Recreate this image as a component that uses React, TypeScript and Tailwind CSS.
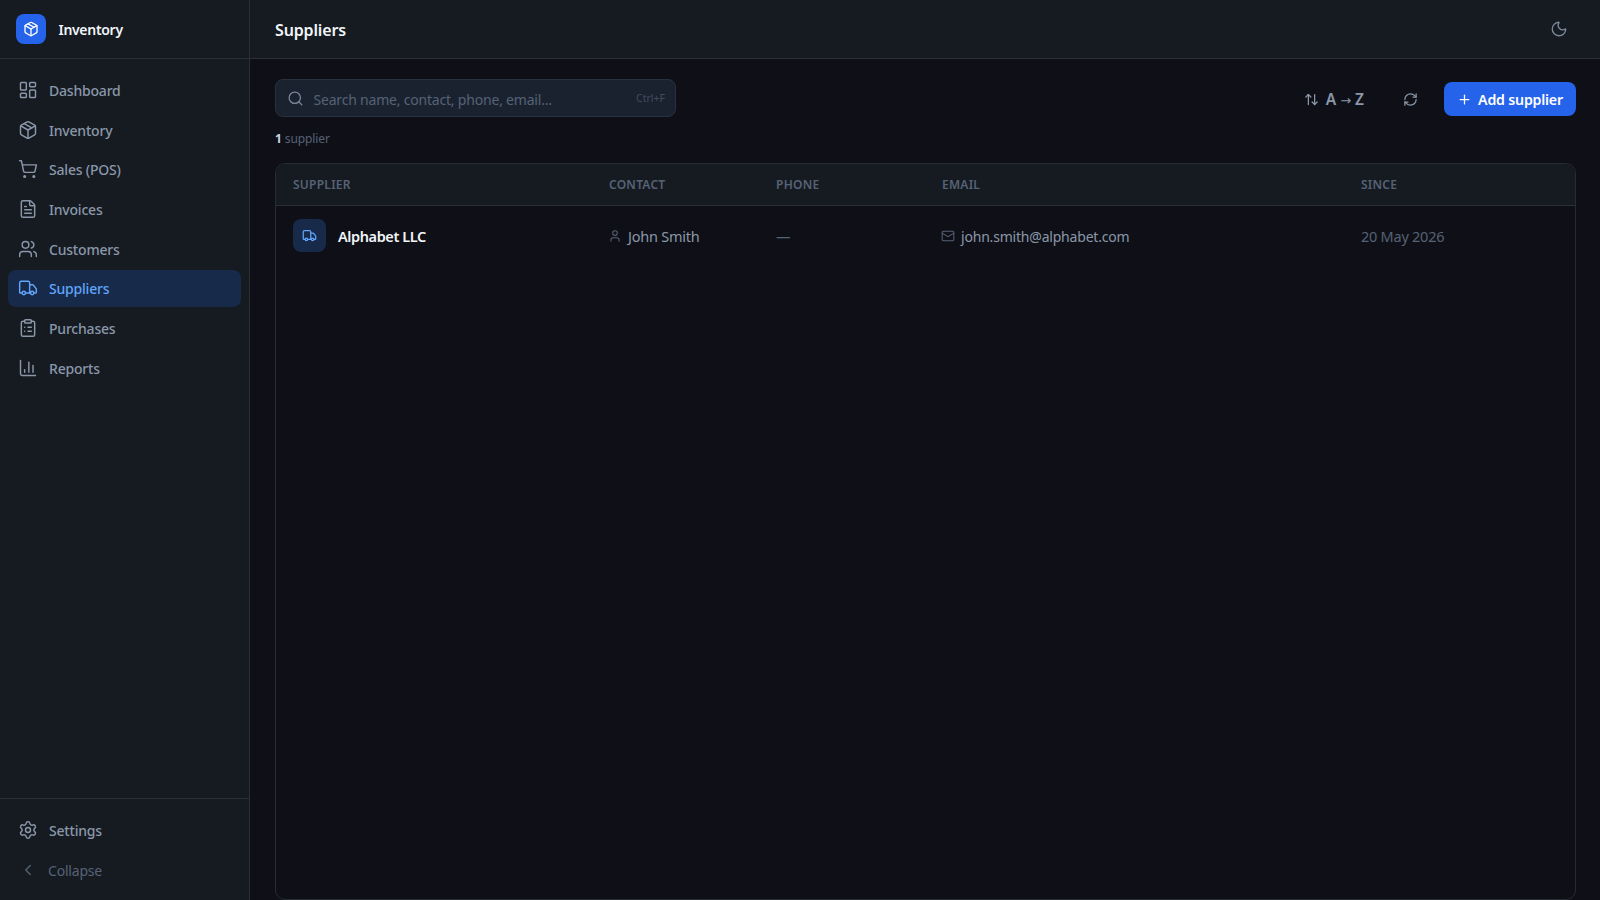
import React from "react";
import {
  LayoutDashboard, Package, ShoppingCart, FileText, Users, Truck, ClipboardList, ChartColumn,
  Settings, ChevronLeft, Search, ArrowUpDown, RefreshCw, Plus, Moon, User, Mail,
} from "lucide-react";

const nav = [
  { label: "Dashboard", icon: LayoutDashboard },
  { label: "Inventory", icon: Package },
  { label: "Sales (POS)", icon: ShoppingCart },
  { label: "Invoices", icon: FileText },
  { label: "Customers", icon: Users },
  { label: "Suppliers", icon: Truck, active: true },
  { label: "Purchases", icon: ClipboardList },
  { label: "Reports", icon: ChartColumn },
];

const row = "grid grid-cols-[316px_167px_166px_419px_1fr]";

export default function App() {
  return (
    <div className="flex h-[900px] w-[1600px] overflow-hidden bg-[#0f1017] font-['Noto_Sans','Liberation_Sans',sans-serif] text-[#94a3b8]">
      <aside className="flex w-[250px] shrink-0 flex-col border-r border-[#2a2f38] bg-[#161b22]">
        <div className="flex h-[59px] shrink-0 items-center gap-[12.5px] border-b border-[#2a2f38] pl-[16px]">
          <div className="flex h-[30px] w-[30px] items-center justify-center rounded-lg bg-[#2563eb] text-white">
            <Package size={16} strokeWidth={2} />
          </div>
          <span className="pt-[1px] text-[14px] font-semibold tracking-[-0.3px] text-[#f1f5f9]">Inventory</span>
        </div>
        <nav className="flex flex-1 flex-col gap-[2.25px] px-2 pt-[12.4px]">
          {nav.map((n) => {
            const Icon = n.icon;
            return (
              <div
                key={n.label}
                className={`flex h-[37.4px] items-center gap-[11.5px] rounded-lg pl-[9.5px] text-[14px] font-medium tracking-[-0.2px] ${
                  n.active ? "bg-[#172a4a] text-[#60a5fa]" : "text-[#8a97a9]"
                }`}
              >
                <Icon size={20} strokeWidth={1.75} className="shrink-0" />
                <span className="pt-[1px]">{n.label}</span>
              </div>
            );
          })}
        </nav>
        <div className="flex flex-col gap-[2.25px] border-t border-[#2a2f38] px-2 pb-[11.5px] pt-[12.5px]">
          <div className="flex h-[37.4px] items-center gap-[11.5px] rounded-lg pl-[9.5px] text-[14px] font-medium tracking-[-0.2px] text-[#8a97a9]">
            <Settings size={20} strokeWidth={1.75} className="shrink-0" />
            <span className="pt-[1px]">Settings</span>
          </div>
          <div className="flex h-[37.4px] items-center gap-[11px] rounded-lg pl-[11px] text-[14px] tracking-[-0.2px] text-[#566275]">
            <ChevronLeft size={18} strokeWidth={1.75} className="shrink-0" />
            <span className="pt-[2px]">Collapse</span>
          </div>
        </div>
      </aside>

      <main className="flex min-w-0 flex-1 flex-col">
        <header className="flex h-[59px] shrink-0 items-center justify-between border-b border-[#2a2f38] bg-[#161b22] pl-[25px] pr-[32px]">
          <h1 className="pt-[2px] text-[16px] font-semibold tracking-[-0.15px] text-[#f1f5f9]">Suppliers</h1>
          <Moon size={18} strokeWidth={1.75} className="text-[#7d8a9c]" />
        </header>

        <div className="flex min-h-0 flex-1 flex-col pl-[25px] pr-[24px] pt-[20px]">
          <div className="flex items-center justify-between">
            <div className="flex h-[38px] w-[401px] items-center rounded-lg border border-[#283140] bg-[#1a2230] pl-[11px] pr-[10px]">
              <Search size={17} strokeWidth={1.75} className="shrink-0 text-[#7d8a9c]" />
              <span className="ml-[9.5px] flex-1 pt-[2px] text-[14px] tracking-[-0.2px] text-[#566275]">Search name, contact, phone, email...</span>
              <span className="pt-[2px] text-[10.5px] text-[#414c5c]">Ctrl+F</span>
            </div>
            <div className="flex items-center pt-[2px]">
              <div className="flex items-center gap-[6.5px] text-[15.5px] font-semibold text-[#8a97a9]">
                <ArrowUpDown size={15} strokeWidth={2} />
                <span className="pt-[1px]">A <span className="font-['DejaVu_Sans'] text-[13px] font-normal">→</span> Z</span>
              </div>
              <RefreshCw size={15} strokeWidth={2} className="ml-[38.5px] text-[#8a97a9]" />
              <button className="ml-[26.5px] flex h-[34px] w-[132px] items-center justify-center gap-[6px] rounded-lg bg-[#2563eb] text-[14.2px] font-semibold tracking-[-0.2px] text-white">
                <Plus size={15} strokeWidth={2} />
                <span className="pt-[1px]">Add supplier</span>
              </button>
            </div>
          </div>

          <div className="mt-[13px] text-[12px] leading-[18px] tracking-[-0.1px] text-[#566275]">
            <span className="font-bold text-[#cbd5e1]">1</span> supplier
          </div>

          <div className="mt-[15px] min-h-0 flex-1 rounded-[10px] border border-[#262b34] bg-[#0f1017]">
            <div className={`${row} h-[42px] items-center rounded-t-[10px] border-b border-[#2a2f38] bg-[#161b22] text-[12px] font-semibold tracking-[0.25px] text-[#566275]`}>
              <div className="pl-[17px] pt-[1px]">SUPPLIER</div>
              <div className="pl-[17px] pt-[1px]">CONTACT</div>
              <div className="pl-[17px] pt-[1px]">PHONE</div>
              <div className="pl-[17px] pt-[1px]">EMAIL</div>
              <div className="pl-[17px] pt-[1px]">SINCE</div>
            </div>
            <div className={`${row} h-[58px] items-center text-[14.5px] tracking-[-0.25px]`}>
              <div className="flex items-center gap-3 pl-[17px]">
                <div className="flex h-[33px] w-[33px] items-center justify-center rounded-lg bg-[#172a4a] text-[#60a5fa]">
                  <Truck size={15} strokeWidth={2} />
                </div>
                <span className="pt-[4px] font-semibold tracking-[-0.4px] text-[#f1f5f9]">Alphabet LLC</span>
              </div>
              <div className="flex items-center gap-[6px] pl-[16px] text-[#8a97a9]">
                <User size={14} strokeWidth={1.75} className="mt-[1px] text-[#566275]" />
                <span className="pt-[4px]">John Smith</span>
              </div>
              <div className="pl-[17px] pt-[4px] text-[#566275]">—</div>
              <div className="flex items-center gap-[6px] pl-[16px] text-[14px] tracking-[-0.2px] text-[#8a97a9]">
                <Mail size={14} strokeWidth={1.75} className="mt-[1px] text-[#566275]" />
                <span className="pt-[3px]">john.smith@alphabet.com</span>
              </div>
              <div className="pl-[17px] pt-[4px] text-[#566275]">20 May 2026</div>
            </div>
          </div>
        </div>
      </main>
    </div>
  );
}
